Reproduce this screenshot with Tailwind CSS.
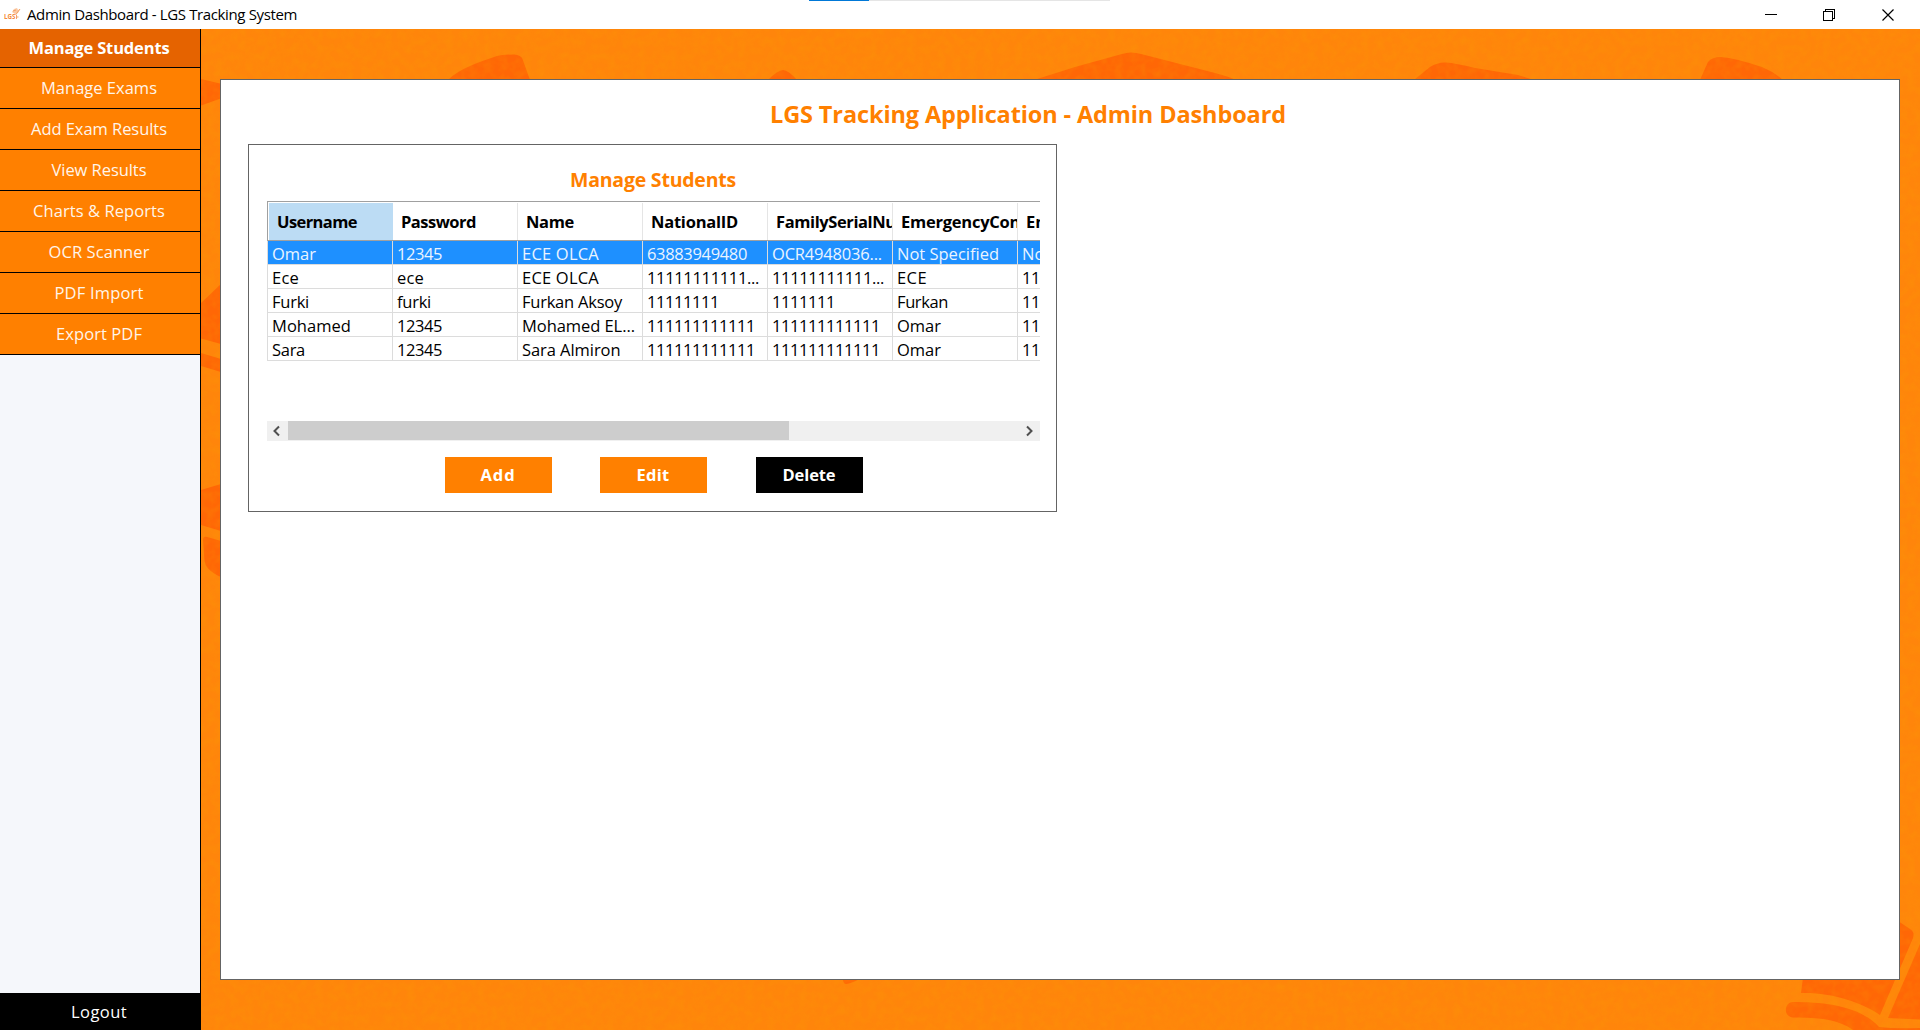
<!DOCTYPE html>
<html lang="en">
<head>
<meta charset="utf-8">
<title>Admin Dashboard - LGS Tracking System</title>
<script src="https://cdn.jsdelivr.net/npm/@tailwindcss/browser@4"></script>
</head>
<body class="w-[1920px] h-[1030px] overflow-hidden bg-white font-['Open_Sans','Noto_Sans',sans-serif] text-[16.5px] text-black flex flex-col">

<!-- Title bar -->
<header class="relative h-[29px] shrink-0 bg-white flex items-center pb-[5px]">
  <svg class="ml-1 mt-[3px]" width="17" height="14" viewBox="0 0 17 14">
    <text x="0" y="12" font-size="6.5" font-weight="700" font-family="Open Sans, sans-serif" fill="#f58a3c" textLength="11.5" lengthAdjust="spacingAndGlyphs">LGS</text>
    <path d="M8 5 L10 2 L13 1 L14 3 L16 2 L14 6 L11 7 Z" fill="#fbc9a4"/>
    <path d="M16 2 L11.500 8 M9 4 L12 3 M12 10 h2.500 M12.500 8 v4" stroke="#f3a267" stroke-width="1" fill="none"/>
  </svg>
  <span class="ml-[6px] mt-[4px] text-[15px] leading-6 whitespace-nowrap" data-w="270">Admin Dashboard - LGS Tracking System</span>
  <div class="absolute left-[809px] top-0 w-[301px] h-px bg-[#e5e5e5]"><div class="w-[60px] h-px bg-[#0078d7]"></div></div>
  <svg class="ml-auto mt-[5px] mr-[25px] shrink-0" width="130" height="14" viewBox="0 0 130 14" fill="none" stroke="#000" shape-rendering="crispEdges">
    <path d="M0 6.500 h12"/>
    <path d="M58.500 3.500 h9 v9 h-9 z M60.500 3 v-1.500 h9 v9 h-1.500"/>
    <path d="M117.500 1.500 l11 11 M128.500 1.500 l-11 11" shape-rendering="auto" stroke-width="1.200"/>
  </svg>
</header>

<div class="flex flex-1 min-h-0">
  <!-- Navigation -->
  <nav class="w-[201px] shrink-0 border-r border-black bg-[#f5f7fb] flex flex-col text-center text-[#fff5ea]">
    <div class="h-[39px] leading-[38px] pr-[2px] border-b border-black bg-[#e56300] font-bold text-white"><span data-w="141">Manage Students</span></div>
    <div class="h-[41px] leading-[40px] pr-[2px] border-b border-black bg-[#ff8000]"><span data-w="116">Manage Exams</span></div>
    <div class="h-[41px] leading-[40px] pr-[2px] border-b border-black bg-[#ff8000]"><span data-w="136">Add Exam Results</span></div>
    <div class="h-[41px] leading-[40px] pr-[2px] border-b border-black bg-[#ff8000]"><span data-w="95">View Results</span></div>
    <div class="h-[41px] leading-[40px] pr-[2px] border-b border-black bg-[#ff8000]"><span data-w="132">Charts &amp; Reports</span></div>
    <div class="h-[41px] leading-[40px] pr-[2px] border-b border-black bg-[#ff8000]"><span data-w="101">OCR Scanner</span></div>
    <div class="h-[41px] leading-[40px] pr-[2px] border-b border-black bg-[#ff8000]"><span data-w="89">PDF Import</span></div>
    <div class="h-[41px] leading-[40px] pr-[2px] border-b border-black bg-[#ff8000]"><span data-w="86">Export PDF</span></div>
    <div class="mt-auto h-[37px] leading-[38px] pr-[2px] bg-black text-white"><span data-w="56">Logout</span></div>
  </nav>

  <main class="relative flex-1 bg-[#ff850b] pl-[19px] pt-[50px]">
    <!-- Book-pattern backdrop -->
    <svg class="absolute left-0 top-0" width="1719" height="1001" viewBox="201 29 1719 1001">
      <filter id="grain" x="0" y="0" width="100%" height="100%">
        <feTurbulence type="fractalNoise" baseFrequency="0.13" numOctaves="2" seed="4"/>
        <feColorMatrix values="0 0 0 0 0.93  0 0 0 0 0.38  0 0 0 0 0  1.2 0 0 0 -0.4"/>
      </filter>
      <g fill="#ff6706">
        <path d="M448 80 C460 68 480 62 497 56 Q503 54.500 514 54.500 Q521 55 522.500 59 L530 80 Z"/>
        <path d="M768 80 Q778 70 783 70 Q788 70 797 80 Z"/>
        <path d="M1034 80 L1075 67 L1122 54 Q1131 51 1141 54 L1215 73 Q1230 77 1236 80 Z"/>
        <path d="M1414 80 L1430 67 Q1438 62 1446 62.500 Q1455 63 1475 68 L1518 75 L1534 80 Z"/>
        <path d="M1700 80 L1708 62 Q1712 57 1721 57 Q1735 58 1762 67 Q1774 72 1783 80 Z"/>
        <path d="M201 79 L222 84 V98 L201 105.500 Z"/>
        <path d="M201 303 L221 284 V344 L201 338.500 Z M201 353 L221 359 V372 L201 366 Z"/>
        <path d="M201 490 L221 484 V531 L201 525 Z M203 540 Q203 536 207 537 L221 541 V577 Q205 570 204.500 560 Z"/>
        <path d="M843 978 H861 Q853 983 846 984 Q843 984 843 978 Z"/>
        <path d="M1898 921 L1910 929 Q1915 932 1913 938 L1880 1015 C1862 1002 1830 992 1801 993 L1803 978 H1894 L1898 965 Z"/>
        <path d="M1920 944 L1888 1018 L1920 1019.500 Z"/>
        <path d="M1793 1002 C1825 1002 1860 1006 1879 1027 Q1895 1029 1920 1028 V1030 H1853 C1840 1020 1820 1017 1793 1017.500 C1783 1017 1784 1002 1793 1002 Z"/>
      </g>
      <rect x="201" y="29" width="1719" height="1001" filter="url(#grain)" opacity="0.3"/>
    </svg>

    <section class="relative w-[1680px] h-[901px] bg-white border border-[#646464] pl-[27px]">
      <h1 class="pt-[17px] pl-[522px] h-[64px] leading-[34px] text-[23.500px] font-bold text-[#ff8000] whitespace-nowrap"><span data-w="516">LGS Tracking Application - Admin Dashboard</span></h1>

      <div class="w-[809px] h-[368px] border border-[#646464] pl-[18px] pr-[15px] flex flex-col">
        <h2 class="pt-[19px] h-[56px] leading-[32px] text-[19.500px] font-bold text-[#ff8000] text-center pr-[2px]"><span data-w="166">Manage Students</span></h2>

        <div class="h-[220px] w-[773px] shrink-0 overflow-hidden">
          <!-- Column headings -->
          <div class="flex w-[900px] h-10 border-y border-l border-[#a0a0a0] pt-px pl-px font-bold leading-[37px] whitespace-nowrap">
            <div class="w-[124px] shrink-0 bg-[#bcdcf4] pl-2 overflow-hidden"><span data-w="80">Username</span></div>
            <div class="w-[125px] shrink-0 border-r border-[#e5e5e5] pl-2 overflow-hidden"><span data-w="75">Password</span></div>
            <div class="w-[125px] shrink-0 border-r border-[#e5e5e5] pl-2 overflow-hidden"><span data-w="48">Name</span></div>
            <div class="w-[125px] shrink-0 border-r border-[#e5e5e5] pl-2 overflow-hidden"><span data-w="87">NationalID</span></div>
            <div class="w-[125px] shrink-0 border-r border-[#e5e5e5] pl-2 overflow-hidden"><span data-w="162">FamilySerialNumber</span></div>
            <div class="w-[125px] shrink-0 border-r border-[#e5e5e5] pl-2 overflow-hidden"><span data-w="151">EmergencyContact</span></div>
            <div class="w-[125px] shrink-0 pl-2 overflow-hidden"><span data-w="142">EmergencyPhone</span></div>
          </div>
          <div id="rows" class="w-[900px] border-l border-[#dcdcdc]"></div>
        </div>

        <!-- Horizontal scrollbar -->
        <div class="h-5 w-[773px] shrink-0 bg-[#f0f0f0] flex">
          <svg class="w-[21px] h-5" viewBox="0 0 21 20" fill="none" stroke="#505050" stroke-width="2"><path d="M12 5.500 L7.500 10 L12 14.500"/></svg>
          <div class="w-[501px] h-[19px] bg-[#cdcdcd]"></div>
          <svg class="ml-auto w-[21px] h-5" viewBox="0 0 21 20" fill="none" stroke="#505050" stroke-width="2"><path d="M8 5.500 L12.500 10 L8 14.500"/></svg>
        </div>

        <div class="flex gap-[48px] mt-4 pl-[178px] text-center text-white font-bold leading-[34px]">
          <button class="w-[107px] h-9 pb-px pr-px bg-[#ff8000]"><span data-w="35">Add</span></button>
          <button class="w-[107px] h-9 pb-px pr-px bg-[#ff8000]"><span data-w="33">Edit</span></button>
          <button class="ml-px w-[107px] h-9 pb-px pr-px bg-black"><span data-w="53">Delete</span></button>
        </div>
      </div>
    </section>
  </main>
</div>

<script>
  // Each cell is [text, width in px].
  const students = [
    [["Omar",44],["12345",45],["ECE OLCA",77],["63883949480",100],["OCR4948036...",110],["Not Specified",102],["Not Specified",102]],
    [["Ece",27],["ece",27],["ECE OLCA",77],["11111111111...",112],["11111111111...",112],["ECE",30],["11111111",72]],
    [["Furki",37],["furki",34],["Furkan Aksoy",100],["11111111",72],["1111111",63],["Furkan",51],["11111111",72]],
    [["Mohamed",79],["12345",45],["Mohamed EL...",113],["111111111111",108],["111111111111",108],["Omar",44],["11111111",72]],
    [["Sara",33],["12345",45],["Sara Almiron",98.500],["111111111111",108],["111111111111",108],["Omar",44],["11111111",72]]
  ];
  document.getElementById("rows").innerHTML = students.map((r, i) =>
    `<div class="flex h-6 border-b border-[#dcdcdc] leading-[25px] whitespace-nowrap ${i ? "" : "bg-[#1e90ff] text-[#eaf4ff]"}">` +
    r.map(([t, w]) => `<div class="w-[125px] h-[23px] shrink-0 pl-[4px] border-r border-[#dcdcdc] overflow-hidden"><span data-w="${w}">${t}</span></div>`).join("") +
    `</div>`).join("");

  // Space the letters of each label so that it takes up its own width.
  function fitLabels() {
    document.querySelectorAll("[data-w]").forEach(el => {
      el.style.letterSpacing = "0px";
      const natural = el.getBoundingClientRect().width;
      el.style.letterSpacing = (el.dataset.w - natural) / el.textContent.length + "px";
    });
  }
  fitLabels();
  document.fonts.ready.then(fitLabels);
  window.addEventListener("load", () => { fitLabels(); requestAnimationFrame(fitLabels); });
</script>
</body>
</html>
